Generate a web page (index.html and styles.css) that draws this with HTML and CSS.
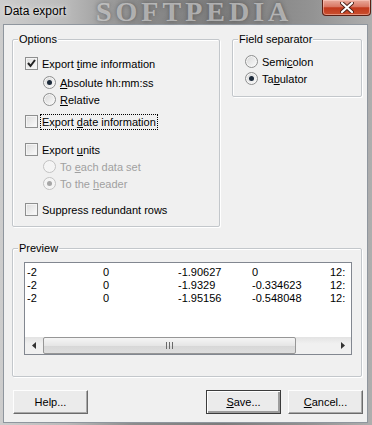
FILE: index.html
```html
<!DOCTYPE html>
<html lang="en">
<head>
  <meta charset="UTF-8">
  <title>Data export</title>
  <link rel="stylesheet" href="styles.css">
</head>
<body>
  <div class="window">
    <div class="titlebar">
      <span class="title">Data export</span>
      <span class="watermark">SOFTPEDIA</span>
      <div class="close">
        <svg width="14" height="11" viewBox="0 0 14 11">
          <path d="M2 1 L12 10 M12 1 L2 10" stroke="#4a2018" stroke-width="4" stroke-linecap="round"/>
          <path d="M2 1 L12 10 M12 1 L2 10" stroke="#fff" stroke-width="2.2" stroke-linecap="round"/>
        </svg>
      </div>
    </div>

    <div class="client">
      <div class="top">
        <div class="group options">
          <span class="group-title">Options</span>
          <div class="row"><span class="box checked"></span><span>Export <u>t</u>ime information</span></div>
          <div class="row sub gap2"><span class="radio on"></span><span><u>A</u>bsolute hh:mm:ss</span></div>
          <div class="row sub"><span class="radio"></span><span><u>R</u>elative</span></div>
          <div class="row gap5"><span class="box"></span><span class="focus">Export <u>d</u>ate information</span></div>
          <div class="row gap11"><span class="box"></span><span>Export <u>u</u>nits</span></div>
          <div class="row sub off"><span class="radio"></span><span>To <u>e</u>ach data set</span></div>
          <div class="row sub off"><span class="radio on"></span><span>To the <u>h</u>eader</span></div>
          <div class="row gap9"><span class="box"></span><span>Suppress redundant rows</span></div>
        </div>

        <div class="group separator">
          <span class="group-title">Field separator</span>
          <div class="row"><span class="radio"></span><span>Semi<u>c</u>olon</span></div>
          <div class="row"><span class="radio on"></span><span>Ta<u>b</u>ulator</span></div>
        </div>
      </div>

      <div class="group preview">
        <span class="group-title">Preview</span>
        <div class="listbox">
          <div class="rows">
            <div class="line"><span>-2</span><span>0</span><span>-1.90627</span><span>0</span><span>12:00:00</span></div>
            <div class="line"><span>-2</span><span>0</span><span>-1.9329</span><span>-0.334623</span><span>12:00:01</span></div>
            <div class="line"><span>-2</span><span>0</span><span>-1.95156</span><span>-0.548048</span><span>12:00:02</span></div>
          </div>
          <div class="hscroll">
            <div class="arrow">
              <svg width="4" height="7" viewBox="0 0 4 7"><path d="M4 0 L0 3.5 L4 7 Z" fill="#333"/></svg>
            </div>
            <div class="thumb">
              <svg width="7" height="7" viewBox="0 0 7 7"><path d="M0.5 0 V7 M3.5 0 V7 M6.5 0 V7" stroke="#6a6a6a" stroke-width="1"/></svg>
            </div>
            <div class="track"></div>
            <div class="arrow">
              <svg width="4" height="7" viewBox="0 0 4 7"><path d="M0 0 L4 3.5 L0 7 Z" fill="#333"/></svg>
            </div>
          </div>
        </div>
      </div>

      <div class="buttons">
        <button class="btn help">Help...</button>
        <button class="btn default"><u>S</u>ave...</button>
        <button class="btn"><u>C</u>ancel...</button>
      </div>
    </div>
  </div>
</body>
</html>
```

FILE: styles.css
```css
body { margin: 0; font-family: "Liberation Sans", Arial, sans-serif; font-size: 11px; color: #000; }

.window {
  width: 372px; height: 425px; overflow: hidden;
  display: flex; flex-direction: column;
  background: linear-gradient(90deg, #cdcdcd 0, #bababa 18%, #8c8c8c 36%, #7c7c7c 60%, #939393 84%, #aeaeae 100%);
}

.titlebar { height: 24px; flex: none; display: flex; position: relative; }
.title { position: relative; z-index: 1; padding: 4px 0 0 4px; font-size: 12px; line-height: 14px; text-shadow: 0 0 6px #e8e8e8, 0 0 3px #e8e8e8; }
.watermark {
  position: absolute; left: 96px; top: 0;
  font-family: "Liberation Serif", serif; font-weight: bold; font-size: 28px; line-height: 24px; letter-spacing: 4px;
  color: rgba(235, 235, 235, 0.55); text-shadow: 0 0 4px rgba(60, 60, 60, 0.6);
}
.close {
  position: relative; z-index: 1;
  margin-left: auto; margin-right: 1px;
  width: 49px; height: 16px; box-sizing: border-box;
  border: 1px solid #5b1f14; border-top: none; border-radius: 0 0 4px 4px;
  background: linear-gradient(#e9aa9c 0, #d97763 45%, #c2381c 52%, #c9502f 100%);
  box-shadow: inset 0 0 0 1px rgba(255, 210, 200, 0.5);
  display: flex; align-items: center; justify-content: center;
}

.client {
  margin: 0 4px 2px 3px; flex: 1;
  background: #f0f0f0; border: 1px solid #8f969e;
  padding: 14px 4px 8px 8px;
}

.top { display: flex; gap: 12px; align-items: flex-start; }

.group {
  position: relative; box-sizing: border-box;
  border: 1px solid #c3c7cb; border-radius: 2px;
  box-shadow: 1px 1px 0 #fff, inset 1px 1px 0 #fff;
}
.group-title {
  position: absolute; left: 5px; top: -7px;
  padding: 0 1px; background: #f0f0f0; line-height: 13px;
}
.options { width: 208px; height: 188px; padding: 15px 0 0 12px; }
.separator { width: 130px; height: 58px; padding: 13px 0 0 12px; }
.preview { width: 350px; height: 129px; margin-top: 21px; padding: 13px 9px 0 11px; }

.row { display: flex; align-items: center; gap: 4px; height: 17px; white-space: nowrap; }
.row.sub { margin-left: 18px; }
.row.off { color: #a0a0a0; }
.gap2 { margin-top: 2px; }
.gap5 { margin-top: 5px; }
.gap11 { margin-top: 11px; }
.gap9 { margin-top: 9px; }
.focus { outline: 1px dotted #000; outline-offset: 1px; }

.box {
  width: 13px; height: 13px; box-sizing: border-box; flex: none;
  border: 1px solid #8e8f8f;
  background: linear-gradient(135deg, #dcdcdc, #fbfbfb);
  box-shadow: inset 0 0 0 1px #f4f4f4;
}
.box.checked {
  background: url("data:image/svg+xml,%3Csvg xmlns='http://www.w3.org/2000/svg' width='11' height='11'%3E%3Cpath d='M2 5 L4.5 8 L9 2' fill='none' stroke='%23222' stroke-width='2'/%3E%3C/svg%3E") center no-repeat,
              linear-gradient(135deg, #dcdcdc, #fbfbfb);
}

.radio {
  position: relative;
  width: 13px; height: 13px; box-sizing: border-box; flex: none;
  border: 1px solid #8e8f8f; border-radius: 50%;
  background: linear-gradient(135deg, #d6d6d6, #fcfcfc);
  box-shadow: inset 0 0 0 1px #f6f6f6;
}
.radio.on::after {
  content: ""; position: absolute; left: 3px; top: 3px;
  width: 5px; height: 5px; border-radius: 50%;
  background: #1c2a3a;
}
.off .radio { border-color: #c2c2c2; background: #f4f4f4; }
.off .radio.on::after { background: #a6a6a6; }

.listbox {
  width: 328px; height: 93px; box-sizing: border-box;
  border: 1px solid #828790; background: #fff;
  display: flex; flex-direction: column;
}
.rows { flex: 1; padding: 3px 0 0 2px; margin-right: 6px; overflow: hidden; white-space: nowrap; }
.line { display: grid; grid-template-columns: 76px 75px 74px 78px 60px; line-height: 13px; }

.hscroll { height: 17px; flex: none; display: flex; background: linear-gradient(#e3e3e3, #f0f0f0 40%, #f0f0f0); }
.arrow { width: 17px; display: flex; align-items: center; justify-content: center; }
.thumb {
  width: 253px; margin-left: 1px; box-sizing: border-box;
  border: 1px solid #969696; border-radius: 2px;
  background: linear-gradient(#f5f5f5, #e6e6e6 50%, #d7d7d7 51%, #dedede);
  display: flex; align-items: center; justify-content: center;
}
.track { flex: 1; }

.buttons { display: flex; margin-top: 13px; gap: 7px; }
.btn {
  width: 75px; height: 24px; padding: 0; margin: 0;
  font: inherit; color: #000;
  background: #ebebeb;
  border: 1px solid; border-color: #fdfdfd #6b6b6b #6b6b6b #fdfdfd;
  box-shadow: inset -1px -1px 0 #a9a9a9;
}
.btn.help { margin-left: 1px; margin-right: auto; }
.btn.default {
  border: 1px solid #3c3c3c;
  box-shadow: inset 1px 1px 0 #fff, inset -2px -2px 0 #9c9c9c;
}
```
